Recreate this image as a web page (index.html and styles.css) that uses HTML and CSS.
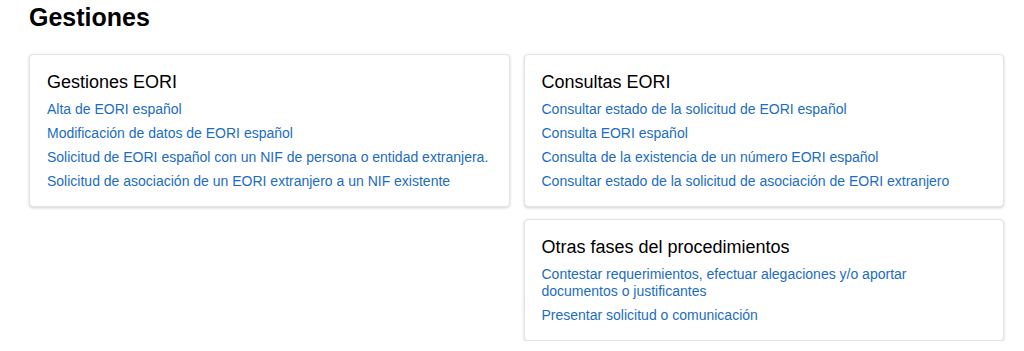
FILE: index.html
```html
<!DOCTYPE html>
<html lang="es">
<head>
  <meta charset="UTF-8">
  <title>Gestiones EORI</title>
  <meta name="viewport" content="width=device-width, initial-scale=1.0">
  <link rel="stylesheet" href="styles.css">
</head>
<body>

<div class="page">
  <h1>Gestiones</h1>

  <div class="cards">

    <section class="card card-gestiones">
      <h3>Gestiones EORI</h3>
      <ul>
        <li><a href="#">Alta de EORI español</a></li>
        <li><a href="#">Modificación de datos de EORI español</a></li>
        <li><a href="#">Solicitud de EORI español con un NIF de persona o entidad extranjera.</a></li>
        <li><a href="#">Solicitud de asociación de un EORI extranjero a un NIF existente</a></li>
      </ul>
    </section>

    <section class="card card-consultas">
      <h3>Consultas EORI</h3>
      <ul>
        <li><a href="#">Consultar estado de la solicitud de EORI español</a></li>
        <li><a href="#">Consulta EORI español</a></li>
        <li><a href="#">Consulta de la existencia de un número EORI español</a></li>
        <li><a href="#">Consultar estado de la solicitud de asociación de EORI extranjero</a></li>
      </ul>
    </section>

    <section class="card card-otras">
      <h3>Otras fases del procedimientos</h3>
      <ul>
        <li><a href="#">Contestar requerimientos, efectuar alegaciones y/o aportar documentos o justificantes</a></li>
        <li><a href="#">Presentar solicitud o comunicación</a></li>
      </ul>
    </section>

  </div>
</div>

</body>
</html>
```

FILE: styles.css
```css
body {
  margin: 0;
  font-family: 'Liberation Sans', Arial, sans-serif;
  background: #fff;
  color: #000;
}
.page {
  padding: 3px 20px 0 29px;
}
h1 {
  font-size: 25px;
  font-weight: bold;
  margin: 0 0 22px;
}
.cards {
  display: grid;
  grid-template-columns: 1fr 1fr;
  column-gap: 14px;
  row-gap: 12px;
  align-items: start;
}
.card-gestiones {
  grid-column: 1;
  grid-row: 1;
}
.card-consultas {
  grid-column: 2;
  grid-row: 1;
}
.card-otras {
  grid-column: 2;
  grid-row: 2;
}
.card {
  background: #fff;
  border: 1px solid #e3e3e3;
  border-radius: 4px;
  box-shadow: 0 1px 3px rgba(0,0,0,0.18);
  padding: 17px 18px 16px 17px;
}
.card h3 {
  font-size: 18px;
  font-weight: normal;
  margin: 0 0 8px;
}
.card ul {
  list-style: none;
  margin: 0;
  padding: 0;
  display: flex;
  flex-direction: column;
  gap: 7px;
}
.card li {
  font-size: 14px;
  line-height: 17px;
}
.card a {
  color: #1c6cc3;
  text-decoration: none;
}
```
